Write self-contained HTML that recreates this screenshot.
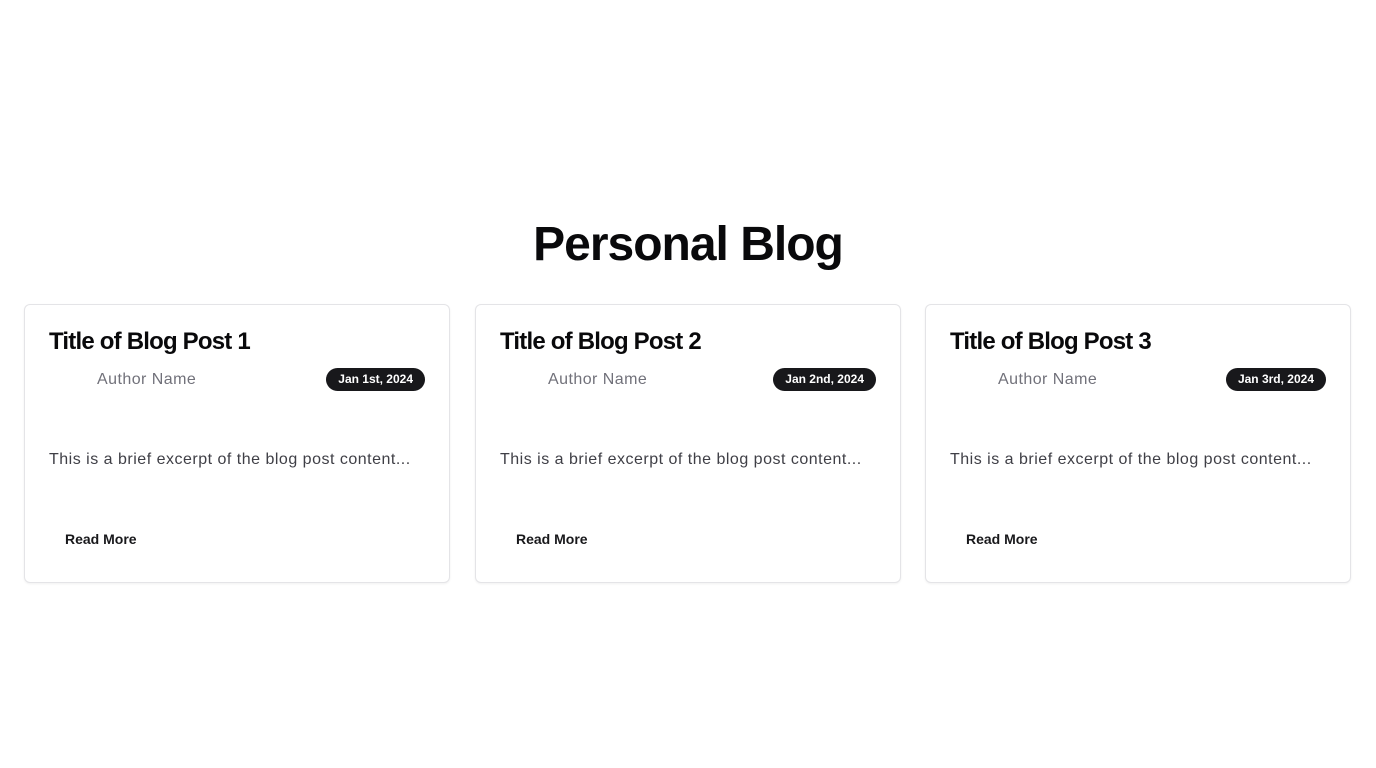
<!DOCTYPE html>
<html><head><meta charset="utf-8"><style>
*{box-sizing:border-box;margin:0;padding:0}
body{width:1376px;height:768px;background:#fff;font-family:"Liberation Sans",sans-serif;color:#09090b;position:relative;overflow:hidden}
h1{position:absolute;top:215px;left:0;width:1376px;text-align:center;font-size:48px;font-weight:800;letter-spacing:-1px;line-height:60px}
.card{position:absolute;top:304px;width:426px;height:279px;border:1px solid #e4e4e7;border-radius:6px;box-shadow:0 1px 2px rgba(0,0,0,.06);background:#fff}
.t{position:absolute;left:24px;top:21px;font-size:24px;font-weight:700;letter-spacing:-0.8px;line-height:32px}
.a{position:absolute;left:72px;top:64px;font-size:16px;color:#71717a;line-height:22px;letter-spacing:0.45px}
.b{position:absolute;right:24px;top:63px;height:23px;padding:0 12px;background:#18181b;color:#fff;border-radius:12px;font-size:12px;font-weight:700;line-height:23px}
.e{position:absolute;left:24px;top:144px;font-size:16px;color:#3f3f46;line-height:22px;letter-spacing:0.5px}
.r{position:absolute;left:40px;top:224px;font-size:14px;font-weight:600;line-height:20px;color:#18181b}
</style></head><body>
<h1>Personal Blog</h1>
<div class="card" style="left:24px"><div class="t">Title of Blog Post 1</div><div class="a">Author Name</div><div class="b">Jan 1st, 2024</div><div class="e">This is a brief excerpt of the blog post content...</div><div class="r">Read More</div></div>
<div class="card" style="left:475px"><div class="t">Title of Blog Post 2</div><div class="a">Author Name</div><div class="b">Jan 2nd, 2024</div><div class="e">This is a brief excerpt of the blog post content...</div><div class="r">Read More</div></div>
<div class="card" style="left:925px"><div class="t">Title of Blog Post 3</div><div class="a">Author Name</div><div class="b">Jan 3rd, 2024</div><div class="e">This is a brief excerpt of the blog post content...</div><div class="r">Read More</div></div>
</body></html>
